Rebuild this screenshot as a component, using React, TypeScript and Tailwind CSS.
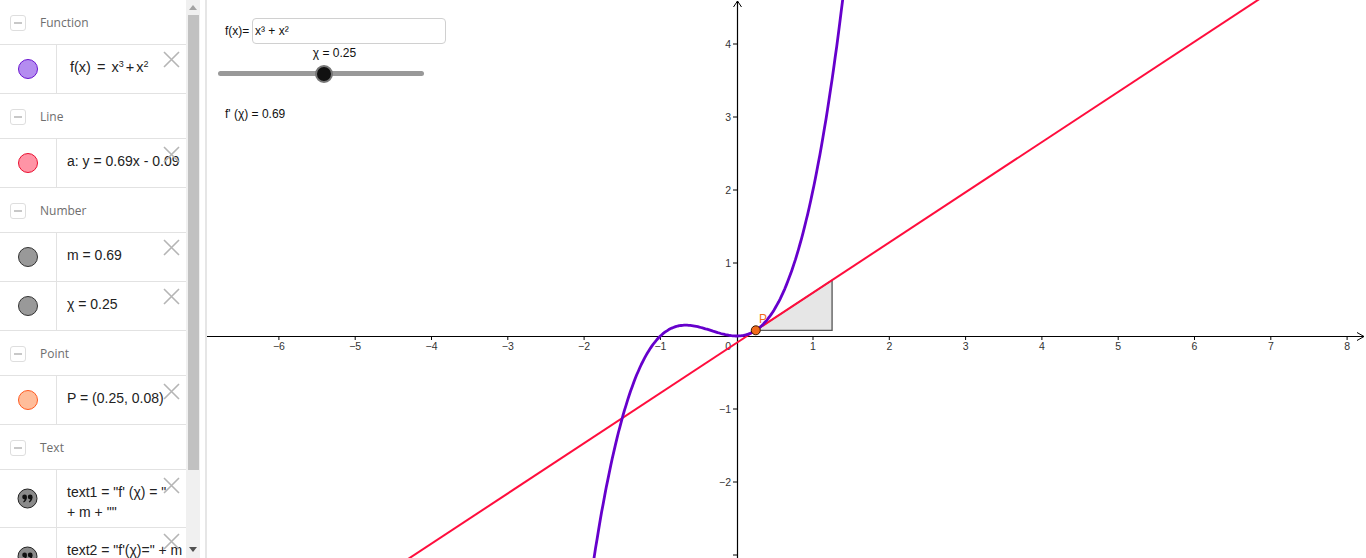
import React from 'react';

const FONT = { fontFamily: '"Liberation Sans", Arial, sans-serif' };

// math -> screen coordinates (page pixels)
const X = (x: number) => 736.7 + 76.3 * x;
const Y = (y: number) => 336 - 73 * y;

function CloseIcon({ top }: { top: number }) {
  return (
    <svg
      className="absolute right-[6px] w-[17px] h-[17px]"
      style={{ top }}
      viewBox="0 0 17 17"
    >
      <path d="M1 1L16 16M16 1L1 16" stroke="#b5b5b5" strokeWidth="1.6" />
    </svg>
  );
}

function QuoteIcon() {
  return (
    <svg width="21" height="21" viewBox="0 0 21 21">
      <circle cx="10.5" cy="10.5" r="9.5" fill="#8a8a8a" stroke="#222" strokeWidth="1" />
      <circle cx="7.6" cy="9" r="2.4" fill="#111" />
      <path d="M9.8 9.2 C9.8 12 8.6 13.6 6.6 14.4 L6.2 13.6 C7.4 12.8 7.8 11.8 7.8 10.6 Z" fill="#111" />
      <circle cx="13.2" cy="9" r="2.4" fill="#111" />
      <path d="M15.4 9.2 C15.4 12 14.2 13.6 12.2 14.4 L11.8 13.6 C13 12.8 13.4 11.8 13.4 10.6 Z" fill="#111" />
    </svg>
  );
}

function Dot({ kind }: { kind: string }) {
  if (kind === 'text') return <QuoteIcon />;
  const cls: Record<string, string> = {
    purple: 'bg-[#b48cf0] border-[#6a14d0]',
    red: 'bg-[#ff94a6] border-[#ea0f30]',
    gray: 'bg-[#999999] border-[#333333]',
    orange: 'bg-[#ffbd9a] border-[#ff5a20]',
  };
  return <div className={`w-5 h-5 rounded-full border ${cls[kind]}`} />;
}

function Header({ title }: { title: string }) {
  return (
    <div className="h-[45px] pt-[1px] flex items-center border-b border-[#e2e2e2]">
      <div className="ml-[10px] w-[16px] h-[16px] rounded-[3px] border border-[#dedede] flex items-center justify-center">
        <div className="w-[8px] h-[2px] bg-[#c8c8c8]" />
      </div>
      <span className="ml-[14px] text-[12px] text-[#6e6e6e]" style={{ fontFamily: '"Open Sans", sans-serif' }}>
        {title}
      </span>
    </div>
  );
}

function Row({
  kind,
  children,
  tall,
  closeTop = 6,
}: {
  kind: string;
  children: React.ReactNode;
  tall?: boolean;
  closeTop?: number;
}) {
  return (
    <div className={`relative flex border-b border-[#e2e2e2] ${tall ? 'h-[58px]' : 'h-[49px]'}`}>
      <div className="w-[57px] shrink-0 flex items-center justify-center border-r border-[#e2e2e2] pr-[1px]">
        <Dot kind={kind} />
      </div>
      <div
        className={`flex-1 overflow-hidden whitespace-nowrap pl-[10px] text-[14px] text-[#222] ${
          tall ? 'pt-[12px] leading-5' : 'flex items-center pb-[3px]'
        }`}
        style={FONT}
      >
        {children}
      </div>
      <CloseIcon top={closeTop} />
    </div>
  );
}

function AlgebraPanel() {
  return (
    <div className="w-[207px] h-[558px] flex shrink-0">
      <div className="w-[186px] h-full overflow-hidden">
        <Header title="Function" />
        <Row kind="purple">
          <span className="ml-[3px] text-[14.5px]">
            f(x) <span className="mx-[2px]">=</span> x<sup className="text-[9px]">3</sup>
            <span className="mx-[2px]">+</span>x<sup className="text-[9px]">2</sup>
          </span>
        </Row>
        <Header title="Line" />
        <Row kind="red" closeTop={7}>
          a: y = 0.69x - 0.09
        </Row>
        <Header title="Number" />
        <Row kind="gray">m = 0.69</Row>
        <Row kind="gray">χ = 0.25</Row>
        <Header title="Point" />
        <Row kind="orange" closeTop={7}>
          P = (0.25, 0.08)
        </Row>
        <Header title="Text" />
        <Row kind="text" tall closeTop={7}>
          <div>text1 = "f' (χ) = "</div>
          <div>+ m + ""</div>
        </Row>
        <Row kind="text" tall closeTop={5}>
          <div>text2 = "f'(χ)=" + m</div>
          <div>+ ""</div>
        </Row>
      </div>
      {/* scrollbar */}
      <div className="w-[14px] h-full bg-[#f0f0f0] flex flex-col items-center">
        <div className="h-[15px] flex items-center justify-center">
          <div className="w-0 h-0 border-l-[4px] border-r-[4px] border-b-[5px] border-l-transparent border-r-transparent border-b-[#a3a3a3]" />
        </div>
        <div className="w-[11px] h-[455px] bg-[#c1c1c1]" />
        <div className="flex-1" />
        <div className="h-[18px] flex items-center justify-center">
          <div className="w-0 h-0 border-l-[4px] border-r-[4px] border-t-[5px] border-l-transparent border-r-transparent border-t-[#505050]" />
        </div>
      </div>
      <div className="w-[5px] h-full bg-white" />
      <div className="w-[2px] h-full bg-[#e6e6e6]" />
    </div>
  );
}

function Graph() {
  let curve = '';
  for (let i = 0; i <= 170; i++) {
    const x = -1.95 + i * 0.02;
    const y = x ** 3 + x ** 2;
    curve += (i ? 'L' : 'M') + X(x).toFixed(1) + ' ' + Y(y).toFixed(1);
  }
  const m = 0.6875;
  const b = 0.078125 - m * 0.25;
  const px = X(0.25);
  const py = Y(0.078125);
  const xs = [-6, -5, -4, -3, -2, -1, 1, 2, 3, 4, 5, 6, 7, 8];
  const ys = [-3, -2, -1, 1, 2, 3, 4];

  return (
    <div className="relative flex-1 h-[558px] overflow-hidden bg-white">
      <svg width="1159" height="558" viewBox="207 0 1159 558" className="block" style={FONT}>
        {/* slope triangle */}
        <polygon
          points={`${px},${py} ${X(1.25)},${py} ${X(1.25)},${Y(m * 1.25 + b)}`}
          fill="#e6e6e6"
          stroke="#555"
          strokeWidth="1.3"
        />
        {/* axes */}
        <line x1="207" y1="336.5" x2="1364" y2="336.5" stroke="#000" strokeWidth="1.2" />
        <polyline points="1357,332.5 1364,336.5 1357,340.5" fill="none" stroke="#000" strokeWidth="1" />
        <line x1="737.5" y1="558" x2="737.5" y2="1" stroke="#000" strokeWidth="1.2" />
        <polyline points="733.5,7 737.5,1 741.5,7" fill="none" stroke="#000" strokeWidth="1" />
        {xs.map((v) => (
          <g key={'x' + v}>
            <line x1={X(v)} y1="336" x2={X(v)} y2="340" stroke="#000" strokeWidth="1" />
            <text x={X(v)} y="350" fontSize="10.5" fill="#333" textAnchor="middle">
              {v < 0 ? '−' + -v : v}
            </text>
          </g>
        ))}
        {ys.map((v) => (
          <g key={'y' + v}>
            <line x1="733" y1={Y(v)} x2="737.5" y2={Y(v)} stroke="#000" strokeWidth="1" />
            {v > -3 && (
              <text x="731" y={Y(v) + 4} fontSize="10.5" fill="#333" textAnchor="end">
                {v < 0 ? '−' + -v : v}
              </text>
            )}
          </g>
        ))}
        <text x="731" y="350" fontSize="10.5" fill="#333" textAnchor="end">
          0
        </text>
        {/* tangent */}
        <line x1={X(-5)} y1={Y(m * -5 + b)} x2={X(8)} y2={Y(m * 8 + b)} stroke="#ff0d3d" strokeWidth="2" />
        {/* function */}
        <path d={curve} fill="none" stroke="#6600cc" strokeWidth="2.8" strokeLinejoin="round" />
        {/* point */}
        <circle cx={px} cy={py} r="4.5" fill="#f26a1b" stroke="#3a1a00" strokeWidth="1" />
        <text x="759" y="323" fontSize="12" fill="#f26a1b">
          P
        </text>
      </svg>

      {/* input box */}
      <div className="absolute left-[18px] top-[18px] flex items-center" style={FONT}>
        <span className="text-[12px] text-[#111] w-[27px]">f(x)=</span>
        <div className="w-[194px] h-[26px] rounded-[4px] border border-[#d0d0d0] flex items-center pl-[2px] text-[12px] text-[#111]">
          x³ + x²
        </div>
      </div>

      {/* slider */}
      <div className="absolute left-[10px] top-[45px] w-[210px]" style={FONT}>
        <div className="text-[12px] text-[#111] text-center leading-4 pl-[25px]">χ = 0.25</div>
        <div className="relative h-[20px] mt-[1px]">
          <div className="absolute left-[1px] top-[9px] w-[206px] h-[5px] rounded-full bg-[#999]" />
          <div className="absolute left-[98px] top-[3px] w-[18px] h-[18px] rounded-full bg-[#111] border-[2px] border-[#777]" />
        </div>
      </div>

      <div className="absolute left-[18px] top-[105px] text-[12px] text-[#111]" style={FONT}>
        f' (χ) = 0.69
      </div>
    </div>
  );
}

export default function App() {
  return (
    <div className="w-[1366px] h-[558px] flex overflow-hidden bg-white">
      <AlgebraPanel />
      <Graph />
    </div>
  );
}
